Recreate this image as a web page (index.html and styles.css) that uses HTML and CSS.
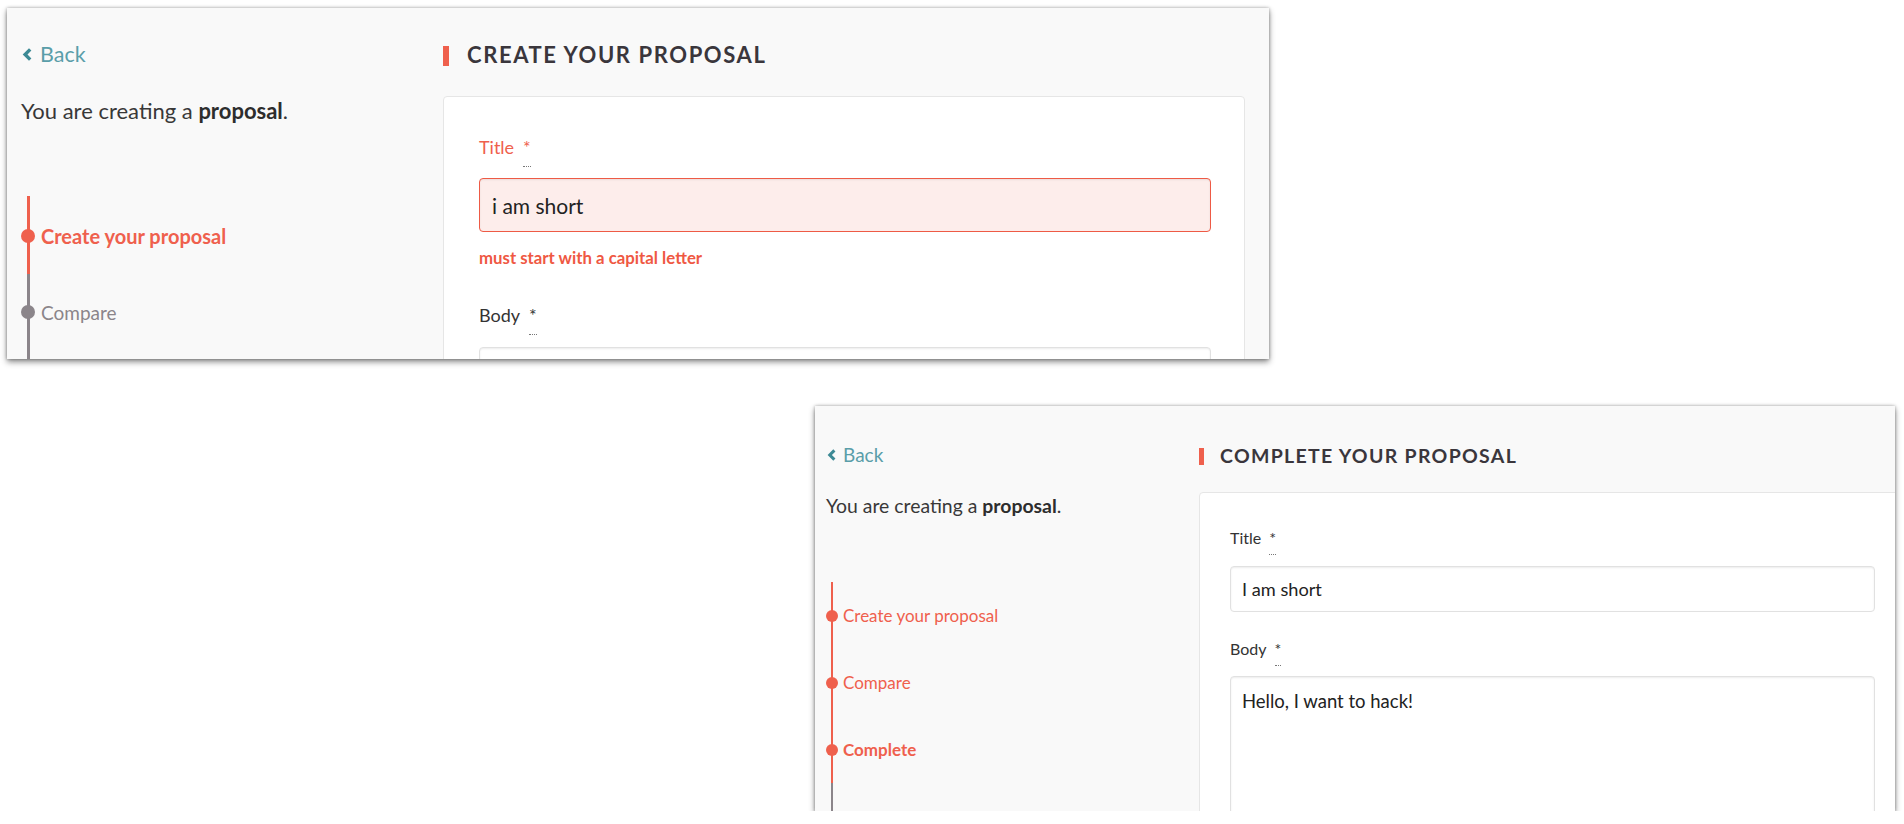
FILE: index.html
```html
<!DOCTYPE html>
<html lang="en">
<head>
<meta charset="utf-8">
<title>Create your proposal</title>
<link rel="stylesheet" href="styles.css">
</head>
<body>
  <section class="shot shot--a">
    <aside class="side">
      <a class="back" href="#">
        <svg class="back__icon" viewBox="0 0 10 13" aria-hidden="true"><path d="M8.2 1.4 L3.1 6.5 L8.2 11.6"/></svg>
        <span>Back</span>
      </a>
      <p class="intro">You are creating a <strong>proposal</strong>.</p>
      <ol class="steps">
        <li class="step step--current"><span class="step__mark"><span class="step__dot"></span></span><span class="step__label">Create your proposal</span></li>
        <li class="step step--todo"><span class="step__mark"><span class="step__dot"></span></span><span class="step__label">Compare</span></li>
      </ol>
    </aside>
    <main class="main">
      <h2 class="heading"><span class="heading__bar"></span>Create your proposal</h2>
      <div class="card">
        <div class="field field--error">
          <label class="label" for="t1">Title<abbr class="req" title="Required field">*</abbr></label>
          <input class="input" id="t1" type="text" value="i am short">
          <small class="error">must start with a capital letter</small>
        </div>
        <div class="field">
          <label class="label" for="b1">Body<abbr class="req" title="Required field">*</abbr></label>
          <textarea class="input textarea" id="b1"></textarea>
        </div>
      </div>
    </main>
  </section>

  <section class="shot shot--b">
    <aside class="side">
      <a class="back" href="#">
        <svg class="back__icon" viewBox="0 0 10 13" aria-hidden="true"><path d="M8.2 1.4 L3.1 6.5 L8.2 11.6"/></svg>
        <span>Back</span>
      </a>
      <p class="intro">You are creating a <strong>proposal</strong>.</p>
      <ol class="steps">
        <li class="step step--done"><span class="step__mark"><span class="step__dot"></span></span><span class="step__label">Create your proposal</span></li>
        <li class="step step--done"><span class="step__mark"><span class="step__dot"></span></span><span class="step__label">Compare</span></li>
        <li class="step step--current"><span class="step__mark"><span class="step__dot"></span></span><span class="step__label">Complete</span></li>
      </ol>
    </aside>
    <main class="main">
      <h2 class="heading"><span class="heading__bar"></span>Complete your proposal</h2>
      <div class="card">
        <div class="field">
          <label class="label" for="t2">Title<abbr class="req" title="Required field">*</abbr></label>
          <input class="input" id="t2" type="text" value="I am short">
        </div>
        <div class="field">
          <label class="label" for="b2">Body<abbr class="req" title="Required field">*</abbr></label>
          <textarea class="input textarea" id="b2">Hello, I want to hack!</textarea>
        </div>
      </div>
    </main>
  </section>
</body>
</html>
```
FILE: styles.css
```css
* { box-sizing: border-box; }

body {
  margin: 0;
  background: #ffffff;
  font-family: Lato, "Noto Sans", sans-serif;
  color: #383838;
}

/* ---------- window frames ---------- */
.shot {
  display: grid;
  align-items: start;
  overflow: hidden;
  background: #f9f9f9;
  box-shadow: 0 3px 6px rgba(0, 0, 0, 0.45), 0 0 3px rgba(0, 0, 0, 0.3);
}
.shot--a {
  margin: 8px 0 0 7px;
  width: 1262px;
  height: 351px;
  grid-template-columns: 436px 1fr;
}
.shot--b {
  margin: 47px 0 0 815px;
  width: 1080px;
  height: 405px;
  grid-template-columns: 384px 1fr;
}

/* ---------- sidebar ---------- */
.side {
  display: flex;
  flex-direction: column;
  align-items: flex-start;
}
.shot--a .side { padding: 31px 0 0 14px; }
.shot--b .side { padding: 36px 0 0 11px; }

.back {
  display: flex;
  align-items: center;
  color: #5a9ea9;
  text-decoration: none;
}
.back__icon {
  fill: none;
  stroke: #3d8a95;
  stroke-width: 3.4;
  stroke-linejoin: miter;
  flex: none;
}
.shot--a .back { font-size: 21.5px; line-height: 30px; gap: 8px; margin-left: 1px; }
.shot--a .back__icon { width: 10px; height: 13px; }
.shot--b .back { font-size: 19px; line-height: 26px; gap: 7px; margin-left: 1px; }
.shot--b .back__icon { width: 9px; height: 12px; }

.intro { margin: 0; }
.intro strong { font-weight: 700; color: #2d2d2d; }
.shot--a .intro { font-size: 22px; line-height: 30px; margin-top: 27px; }
.shot--b .intro { font-size: 19.4px; line-height: 26px; margin-top: 24.5px; }

/* ---------- steps ---------- */
.steps {
  list-style: none;
  margin: 0;
  padding: 0;
  align-self: stretch;
}
.shot--a .steps { margin-top: 70px; padding-top: 2px; --mw: 14px; --lw: 3px;
  background: linear-gradient(#ef604d, #ef604d) no-repeat;
  background-size: var(--lw) 2px;
  background-position: calc((var(--mw) - var(--lw)) / 2) 0;
}
.shot--b .steps { margin-top: 63.5px; --mw: 12px; --lw: 2px; }

.steps::after {
  content: "";
  display: block;
  height: 140px;
  background: linear-gradient(#8b858a, #8b858a) no-repeat;
  background-size: var(--lw) 100%;
  background-position: calc((var(--mw) - var(--lw)) / 2) 0;
}

.step {
  display: flex;
  align-items: center;
  --line: #8b858a;
  color: #8b858a;
}
.step--done,
.step--current {
  --line: #ef604d;
  color: #ef604d;
}
.step--current .step__label { font-weight: 700; }

.step__mark {
  flex: none;
  width: var(--mw);
  align-self: stretch;
  display: flex;
  align-items: center;
  justify-content: center;
  background: linear-gradient(var(--line), var(--line)) no-repeat center;
  background-size: var(--lw) 100%;
}
.step__dot {
  width: var(--mw);
  height: var(--mw);
  border-radius: 50%;
  background: var(--line);
}

.shot--a .step { height: 76px; }
.shot--a .step__label { margin-left: 6px; font-size: 19px; }
.shot--a .step--current .step__label { font-size: 20px; }
.shot--b .step { height: 67px; }
.shot--b .step__label { margin-left: 5px; font-size: 17px; }

/* ---------- main column ---------- */
.main {
  display: flex;
  flex-direction: column;
  align-items: flex-start;
}
.shot--a .main { padding: 31.5px 24px 0 0; }
.shot--b .main { padding-top: 36.5px; }

.heading {
  display: flex;
  align-items: flex-start;
  margin: 0;
  font-weight: 700;
  text-transform: uppercase;
  color: #3a363c;
}
.heading__bar { flex: none; background: #ef604d; }
.shot--a .heading { font-size: 22px; line-height: 30px; letter-spacing: 1.6px; }
.shot--a .heading__bar { width: 6px; height: 20px; margin: 6.5px 18px 0 0; }
.shot--b .heading { font-size: 19.5px; line-height: 26px; letter-spacing: 1.3px; }
.shot--b .heading__bar { width: 5px; height: 17px; margin: 5.5px 16px 0 0; }

.card {
  background: #ffffff;
  border: 1px solid #e6e6e6;
  border-radius: 4px;
  height: 420px;
}
.shot--a .card { align-self: stretch; margin-top: 26.5px; padding: 38px 33px 0 35px; }
.shot--b .card { width: 720px; margin-top: 23.5px; padding: 35px 0 0 30px; }

/* ---------- form ---------- */
.label { display: block; color: #333333; }
.field--error .label { color: #ef604d; }
.shot--a .label { font-size: 18px; line-height: 24px; height: 24px; }
.shot--b .label { font-size: 16px; line-height: 20px; height: 20px; }

.req {
  display: inline-block;
  text-decoration: none;
  border-bottom: 1px dotted #777777;
  color: inherit;
}
.shot--a .req { line-height: 18px; padding-bottom: 10px; margin-left: 9px; }
.shot--b .req { line-height: 16px; padding-bottom: 8px; margin-left: 8px; }

.input {
  display: block;
  width: 100%;
  margin: 0;
  font: inherit;
  color: #222222;
  background: #ffffff;
  border: 1px solid #e1e1e1;
  border-radius: 4px;
  box-shadow: inset 0 1px 2px rgba(10, 10, 10, 0.08);
  outline: none;
}
.field--error .input {
  background: #fdedeb;
  border-color: #ee5a45;
}
.textarea { resize: none; }

.shot--a .input { margin-top: 19px; height: 54px; padding: 0 12px; font-size: 21px; }
.shot--b .input { margin-top: 18px; height: 46px; padding: 0 11px; font-size: 18.2px; width: 645px; }
.shot--a .textarea { margin-top: 20px; height: 200px; }
.shot--b .textarea { margin-top: 17.2px; height: 200px; padding: 12px 11px; font-size: 18.5px; line-height: 24px; }

.error {
  display: block;
  font-weight: 700;
  color: #ef5843;
}
.shot--a .error { margin-top: 15.4px; font-size: 16.8px; line-height: 22px; }

.shot--a .field + .field { margin-top: 33.6px; }
.shot--b .field + .field { margin-top: 26.8px; }
```
